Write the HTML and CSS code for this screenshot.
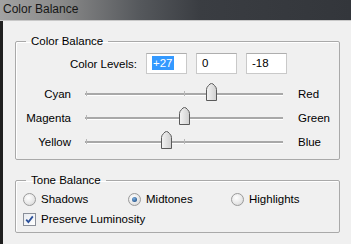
FILE: index.html
```html
<!DOCTYPE html>
<html lang="en">
<head>
    <meta charset="UTF-8">
    <title>Color Balance</title>
    <link rel="stylesheet" href="styles.css">
</head>
<body>
    <div class="window">
        <div class="titlebar">Color Balance</div>
        <div class="frame">
            <fieldset class="group group-balance">
                <legend>Color Balance</legend>
                <div class="levels">
                    <span class="levels-label">Color Levels:</span>
                    <div class="field"><span class="selected">+27</span></div>
                    <div class="field">0</div>
                    <div class="field">-18</div>
                </div>
                <div class="sliders">
                    <span class="left">Cyan</span>
                    <div class="track">
                        <i class="tick tick-start"></i><i class="tick tick-mid"></i>
                        <svg class="thumb" style="left: 63.5%" width="11" height="18" viewBox="0 0 11 18"><defs><linearGradient id="tg1" x1="0" y1="0" x2="1" y2="0"><stop offset="0" stop-color="#f4f4f4"/><stop offset="1" stop-color="#cfcfcf"/></linearGradient></defs><path d="M0.5 17.5 V6.5 Q0.5 4.5 2.5 2.5 L4 1 Q5.5 -0.2 7 1 L8.5 2.5 Q10.5 4.5 10.5 6.5 V17.5 Z" fill="url(#tg1)" stroke="#5a5a5a"/></svg>
                    </div>
                    <span class="right">Red</span>

                    <span class="left">Magenta</span>
                    <div class="track">
                        <i class="tick tick-start"></i><i class="tick tick-mid"></i>
                        <svg class="thumb" style="left: 50%" width="11" height="18" viewBox="0 0 11 18"><defs><linearGradient id="tg2" x1="0" y1="0" x2="1" y2="0"><stop offset="0" stop-color="#f4f4f4"/><stop offset="1" stop-color="#cfcfcf"/></linearGradient></defs><path d="M0.5 17.5 V6.5 Q0.5 4.5 2.5 2.5 L4 1 Q5.5 -0.2 7 1 L8.5 2.5 Q10.5 4.5 10.5 6.5 V17.5 Z" fill="url(#tg2)" stroke="#5a5a5a"/></svg>
                    </div>
                    <span class="right">Green</span>

                    <span class="left">Yellow</span>
                    <div class="track">
                        <i class="tick tick-start"></i><i class="tick tick-mid"></i>
                        <svg class="thumb" style="left: 41%" width="11" height="18" viewBox="0 0 11 18"><defs><linearGradient id="tg3" x1="0" y1="0" x2="1" y2="0"><stop offset="0" stop-color="#f4f4f4"/><stop offset="1" stop-color="#cfcfcf"/></linearGradient></defs><path d="M0.5 17.5 V6.5 Q0.5 4.5 2.5 2.5 L4 1 Q5.5 -0.2 7 1 L8.5 2.5 Q10.5 4.5 10.5 6.5 V17.5 Z" fill="url(#tg3)" stroke="#5a5a5a"/></svg>
                    </div>
                    <span class="right">Blue</span>
                </div>
            </fieldset>

            <fieldset class="group group-tone">
                <legend>Tone Balance</legend>
                <div class="tones">
                    <label class="option"><span class="radio"></span>Shadows</label>
                    <label class="option"><span class="radio checked"></span>Midtones</label>
                    <label class="option"><span class="radio"></span>Highlights</label>
                </div>
                <label class="option preserve">
                    <span class="checkbox">
                        <svg width="9" height="9" viewBox="0 0 9 9"><path d="M1.2 4.6 L3.4 7 L7.8 1.4" fill="none" stroke="#2a4f9a" stroke-width="1.8"/></svg>
                    </span>Preserve Luminosity
                </label>
            </fieldset>
        </div>
    </div>
</body>
</html>
```

FILE: styles.css
```css
body {
    margin: 0;
    font-family: "Liberation Sans", Arial, sans-serif;
    font-size: 11.5px;
    color: #000;
    background: #f0f0f0;
}
.window {
    width: 351px;
    height: 244px;
    overflow: hidden;
    background: #f0f0f0;
}
.titlebar {
    height: 20px;
    line-height: 18px;
    padding-left: 3px;
    font-size: 12px;
    color: #161616;
    background: linear-gradient(90deg, #a2a2a2 0, #8a8a8a 60px, #55585c 140px, #3a3d42 200px, #33363b 100%);
    border-bottom: 1px solid #c8c8c8;
}
.frame {
    height: 223px;
    border-left: 3px solid #1f1f1f;
    box-sizing: border-box;
    padding-top: 13px;
}
.group {
    margin: 0 11px 0 12px;
    padding: 0 0 0 0;
    border: 1px solid #a9a9a9;
    border-radius: 2px;
    box-shadow: inset 1px 1px 0 #fff;
}
.group legend {
    margin-left: 10px;
    padding: 0 5px;
    line-height: 15px;
}
.group-balance {
    padding-bottom: 5px;
}
.levels {
    display: flex;
    align-items: center;
    gap: 9px;
    margin-top: 4px;
    height: 21px;
}
.levels-label {
    width: 121px;
    text-align: right;
}
.field {
    width: 41px;
    height: 21px;
    box-sizing: border-box;
    border: 1px solid #c9c9c9;
    border-top-color: #aeaeae;
    background: #fff;
    line-height: 19px;
    padding-left: 5px;
}
.selected {
    background: #3399ff;
    color: #fff;
    padding: 1px 1px;
}
.sliders {
    display: grid;
    grid-template-columns: 55px 198px auto;
    grid-auto-rows: 24px;
    column-gap: 14px;
    align-items: center;
    margin-top: 8px;
}
.sliders .left {
    text-align: right;
}
.sliders .right {
    padding-left: 1px;
}
.track {
    position: relative;
    height: 2px;
    background: #a8a8a8;
    border-bottom: 1px solid #fff;
}
.tick {
    position: absolute;
    top: -2px;
    width: 1px;
    height: 5px;
    background: #b8b8b8;
}
.tick-start {
    left: 1px;
}
.tick-mid {
    left: 50%;
}
.thumb {
    position: absolute;
    top: -10px;
    margin-left: -5px;
}
.group-tone {
    margin-top: 13px;
    padding-bottom: 3px;
}
.tones {
    display: grid;
    grid-template-columns: 105px 103px auto;
    height: 20px;
    align-items: center;
    padding-left: 7px;
    margin-top: 1px;
}
.option {
    display: flex;
    align-items: center;
    gap: 5px;
}
.preserve {
    height: 20px;
    padding-left: 7px;
}
.radio {
    width: 11px;
    height: 11px;
    border-radius: 50%;
    border: 1px solid #9a9a9a;
    background: radial-gradient(circle at 40% 35%, #fff 0, #e6e6e6 60%, #cfcfcf 100%);
    position: relative;
}
.radio.checked::after {
    content: "";
    position: absolute;
    left: 3px;
    top: 3px;
    width: 5px;
    height: 5px;
    border-radius: 50%;
    background: radial-gradient(circle at 40% 35%, #7fb0e0 0, #2c5d93 70%, #1b3f6b 100%);
}
.checkbox {
    width: 11px;
    height: 11px;
    border: 1px solid #8a8f99;
    background: linear-gradient(135deg, #e8ebf0, #ffffff);
    display: flex;
    align-items: center;
    justify-content: center;
}
```
